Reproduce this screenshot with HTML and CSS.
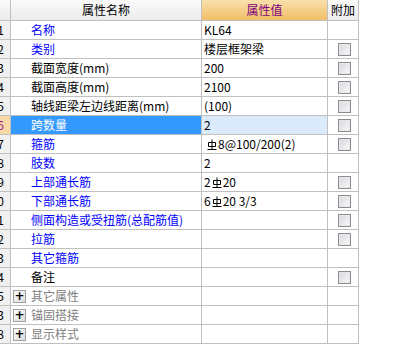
FILE: index.html
```html
<!DOCTYPE html>
<html lang="zh">
<head>
<meta charset="utf-8">
<title>属性编辑</title>
<link rel="stylesheet" href="styles.css">
</head>
<body>
<div class="grid">
  <div class="hd num"></div>
  <div class="hd">属性名称</div>
  <div class="hd val-hd">属性值</div>
  <div class="hd">附加</div>

  <div class="num">1</div><div class="name blue">名称</div><div class="val">KL64</div><div class="ex"></div>
  <div class="num">2</div><div class="name blue">类别</div><div class="val">楼层框架梁</div><div class="ex"><span class="cb"></span></div>
  <div class="num">3</div><div class="name">截面宽度(mm)</div><div class="val">200</div><div class="ex"><span class="cb"></span></div>
  <div class="num">4</div><div class="name">截面高度(mm)</div><div class="val">2100</div><div class="ex"><span class="cb"></span></div>
  <div class="num">5</div><div class="name">轴线距梁左边线距离(mm)</div><div class="val">(100)</div><div class="ex"><span class="cb"></span></div>
  <div class="num sel-num">6</div><div class="name sel-name">跨数量</div><div class="val sel-val">2</div><div class="ex"><span class="cb"></span></div>
  <div class="num">7</div><div class="name blue">箍筋</div><div class="val"><span class="pad"></span><svg class="rb" viewBox="0 0 10 12"><path d="M5 0.5V10M1.5 3.5H8.5V7.5H1.5Z M0.5 10.5H9.5" fill="none" stroke="#000" stroke-width="1"/></svg>8@100/200(2)</div><div class="ex"><span class="cb"></span></div>
  <div class="num">8</div><div class="name blue">肢数</div><div class="val">2</div><div class="ex"></div>
  <div class="num">9</div><div class="name blue">上部通长筋</div><div class="val">2<svg class="rb" viewBox="0 0 10 12"><path d="M5 0.5V10M1.5 3.5H8.5V7.5H1.5Z M0.5 10.5H9.5" fill="none" stroke="#000" stroke-width="1"/></svg>20</div><div class="ex"><span class="cb"></span></div>
  <div class="num">10</div><div class="name blue">下部通长筋</div><div class="val">6<svg class="rb" viewBox="0 0 10 12"><path d="M5 0.5V10M1.5 3.5H8.5V7.5H1.5Z M0.5 10.5H9.5" fill="none" stroke="#000" stroke-width="1"/></svg>20 3/3</div><div class="ex"><span class="cb"></span></div>
  <div class="num">11</div><div class="name blue">侧面构造或受扭筋(总配筋值)</div><div class="val"></div><div class="ex"><span class="cb"></span></div>
  <div class="num">12</div><div class="name blue">拉筋</div><div class="val"></div><div class="ex"><span class="cb"></span></div>
  <div class="num">13</div><div class="name blue">其它箍筋</div><div class="val"></div><div class="ex"></div>
  <div class="num">14</div><div class="name">备注</div><div class="val"></div><div class="ex"><span class="cb"></span></div>
  <div class="num">15</div><div class="name grp"><span class="plus">+</span>其它属性</div><div class="val"></div><div class="ex"></div>
  <div class="num">23</div><div class="name grp"><span class="plus">+</span>锚固搭接</div><div class="val"></div><div class="ex"></div>
  <div class="num">38</div><div class="name grp"><span class="plus">+</span>显示样式</div><div class="val"></div><div class="ex"></div>
</div>
</body>
</html>
```

FILE: styles.css
```css
html, body {
  margin: 0;
  padding: 0;
  background: #ffffff;
}

body {
  font-family: "Noto Sans CJK SC", "DejaVu Sans", sans-serif;
  font-size: 12px;
  color: #000000;
}

.grid {
  display: grid;
  grid-template-columns: 10px 190px 125px 30px;
  grid-template-rows: 20px;
  grid-auto-rows: 18px;
  gap: 1px;
  padding: 0 1px 1px 0;
  background: #c0c0c0;
  width: max-content;
}

.grid > div {
  background: #ffffff;
  line-height: 18px;
  white-space: nowrap;
  overflow: hidden;
}

.grid > .hd {
  background: linear-gradient(#fbfbfb, #ebebeb);
  line-height: 20px;
  text-align: center;
  font-size: 12px;
}

.grid > .val-hd {
  background: linear-gradient(#f9e0ac, #f0bf66);
  color: #800080;
}

.grid > .num {
  background: #f0f0f0;
  text-align: right;
  padding-right: 6px;
  direction: rtl;
  color: #000;
}

.grid > .hd.num {
  background: linear-gradient(#fbfbfb, #ebebeb);
  padding: 0;
}

.grid > .sel-num {
  background: #f9d9a8;
  color: #a0208a;
}

.name {
  padding-left: 20px;
}

.blue {
  color: #0000ff;
}

.grid > .sel-name {
  background: #3399ff;
  color: #ffffff;
}

.grid > .grp {
  color: #808080;
  padding-left: 2px;
  display: flex;
  align-items: center;
}

.plus {
  box-sizing: border-box;
  width: 13px;
  height: 13px;
  margin-right: 5px;
  border: 1px solid #a0a0a0;
  background: linear-gradient(135deg, #ffffff, #dcdcdc);
  color: #000;
  font-size: 12px;
  line-height: 10px;
  text-align: center;
  font-family: "DejaVu Sans", sans-serif;
  font-weight: bold;
}

.val {
  padding-left: 2px;
}

.grid > .sel-val {
  background: #dcebfb;
}

.pad {
  display: inline-block;
  width: 2px;
}

.rb {
  width: 10px;
  height: 12px;
  vertical-align: -2px;
  margin: 0 1px;
}

.grid > .ex {
  display: flex;
  align-items: center;
  justify-content: center;
}

.cb {
  box-sizing: border-box;
  width: 13px;
  height: 13px;
  border: 1px solid #8c8c8c;
  background: linear-gradient(135deg, #d6d6de, #fafafa);
  box-shadow: inset 0 0 0 1px #e8e8ee;
  margin-left: 2px;
}
```
